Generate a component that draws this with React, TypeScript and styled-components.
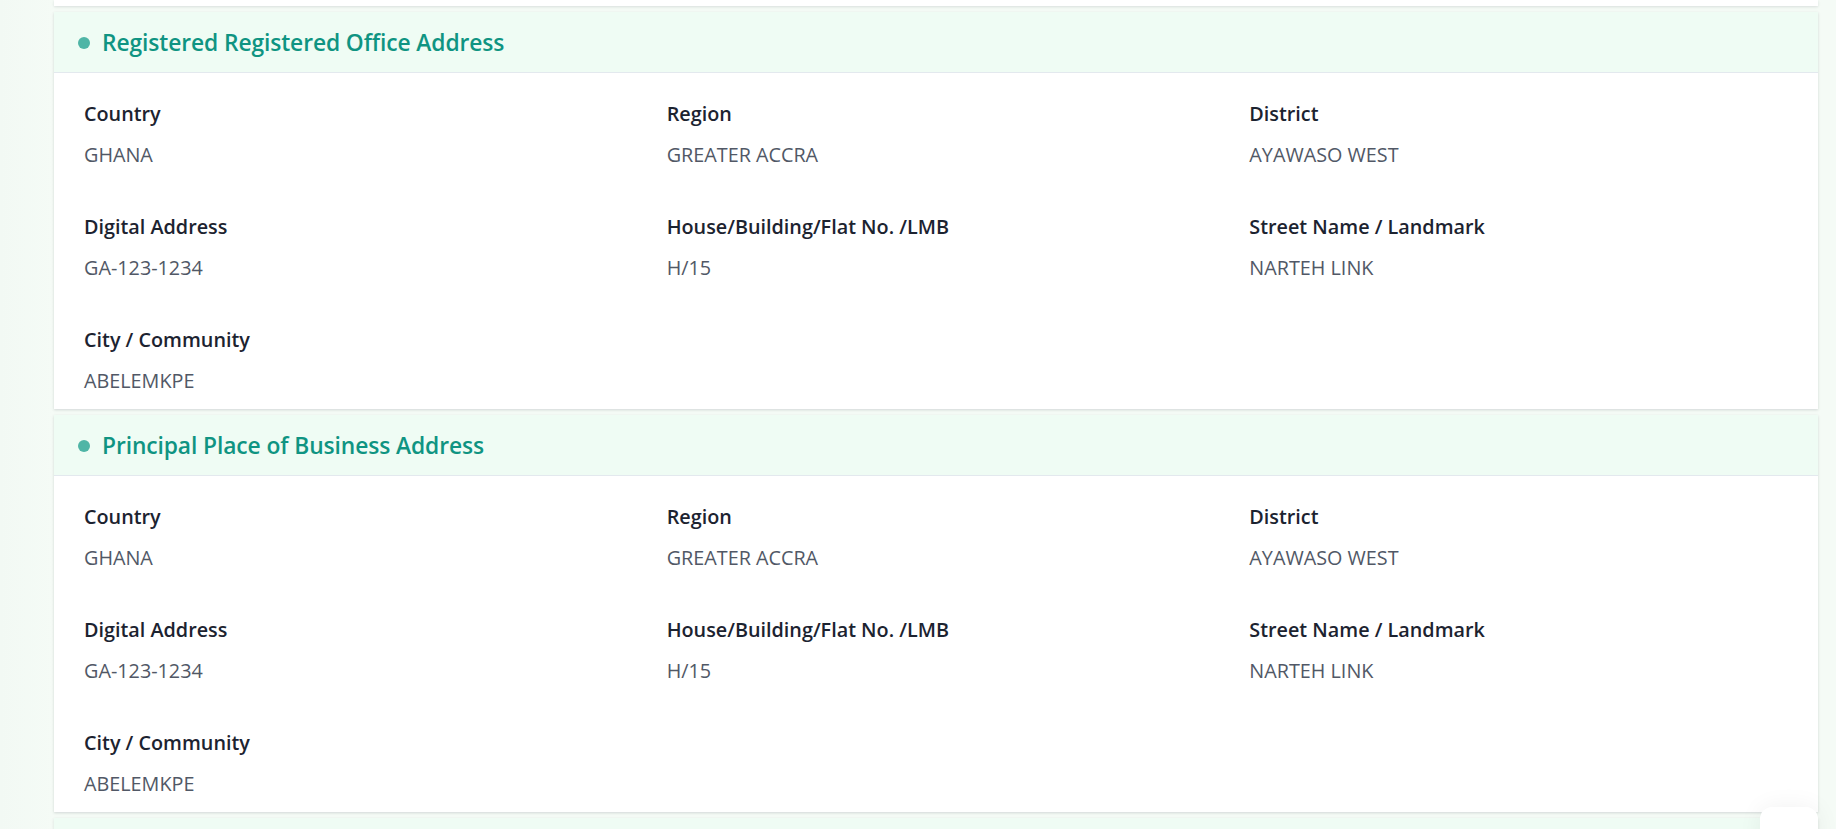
import React from "react";
import styled, { createGlobalStyle } from "styled-components";

const GlobalStyle = createGlobalStyle`
  html, body {
    margin: 0;
    padding: 0;
    height: 100%;
  }
  body {
    background: #f4faf6;
    font-family: "Open Sans", "Noto Sans", Arial, sans-serif;
    overflow: hidden;
  }
  #root {
    height: 100%;
  }
`;

const Page = styled.div`
  position: relative;
  height: 829px;
  overflow: hidden;
  background: linear-gradient(90deg, #f2f9f4 0px, #f5fbf6 54px);
`;

const Column = styled.main`
  display: flex;
  flex-direction: column;
  gap: 6px;
  width: 1764px;
  margin-left: 54px;
`;

const CardTail = styled.div`
  height: 6px;
  background: #ffffff;
  box-shadow: 0 1px 3px rgba(15, 23, 42, 0.12);
`;

const Card = styled.section`
  background: #ffffff;
  box-shadow: 0 1px 3px rgba(15, 23, 42, 0.12), 0 1px 2px rgba(15, 23, 42, 0.04);
  overflow: hidden;
`;

const CardHeader = styled.header`
  display: flex;
  align-items: center;
  gap: 12px;
  height: 59px;
  padding: 1px 24px 0;
  background: #effcf4;
  border-bottom: 1px solid #e3e9ee;
`;

const Dot = styled.span`
  width: 12px;
  height: 12px;
  border-radius: 50%;
  background: #4fb5a6;
  flex: none;
`;

const Title = styled.h2`
  margin: 0;
  font-size: 22.8px;
  font-weight: 600;
  color: #0f9482;
  letter-spacing: -0.1px;
`;

const Body = styled.div`
  display: grid;
  grid-template-columns: repeat(3, 1fr);
  column-gap: 44px;
  row-gap: 46px;
  padding: 28px 30px 15px;
`;

const Field = styled.div`
  display: flex;
  flex-direction: column;
  gap: 15px;
`;

const Label = styled.div`
  font-size: 19.8px;
  line-height: 26px;
  font-weight: 600;
  color: #1c2330;
  letter-spacing: 0;
`;

const Value = styled.div`
  font-size: 19.8px;
  line-height: 26px;
  font-weight: 400;
  color: #515866;
  text-transform: uppercase;
  letter-spacing: 0;
`;

const PartialCard = styled.div`
  height: 40px;
  background: #effcf4;
  box-shadow: 0 1px 3px rgba(15, 23, 42, 0.12);
`;

const FloatingButton = styled.div`
  position: absolute;
  right: 18px;
  bottom: -30px;
  width: 58px;
  height: 52px;
  border-radius: 12px;
  background: #ffffff;
  box-shadow: 0 0 24px rgba(15, 23, 42, 0.06);
`;

type Item = { label: string; value: string };

const address: Item[] = [
  { label: "Country", value: "GHANA" },
  { label: "Region", value: "GREATER ACCRA" },
  { label: "District", value: "AYAWASO WEST" },
  { label: "Digital Address", value: "GA-123-1234" },
  { label: "House/Building/Flat No. /LMB", value: "H/15" },
  { label: "Street Name / Landmark", value: "NARTEH LINK" },
  { label: "City / Community", value: "ABELEMKPE" },
];

const AddressCard: React.FC<{ title: string; items: Item[] }> = ({ title, items }) => (
  <Card>
    <CardHeader>
      <Dot />
      <Title>{title}</Title>
    </CardHeader>
    <Body>
      {items.map((it) => (
        <Field key={it.label}>
          <Label>{it.label}</Label>
          <Value>{it.value}</Value>
        </Field>
      ))}
    </Body>
  </Card>
);

export default function App() {
  return (
    <>
      <GlobalStyle />
      <Page>
        <Column>
          <CardTail />
          <AddressCard title="Registered Registered Office Address" items={address} />
          <AddressCard title="Principal Place of Business Address" items={address} />
          <PartialCard />
        </Column>
        <FloatingButton />
      </Page>
    </>
  );
}
